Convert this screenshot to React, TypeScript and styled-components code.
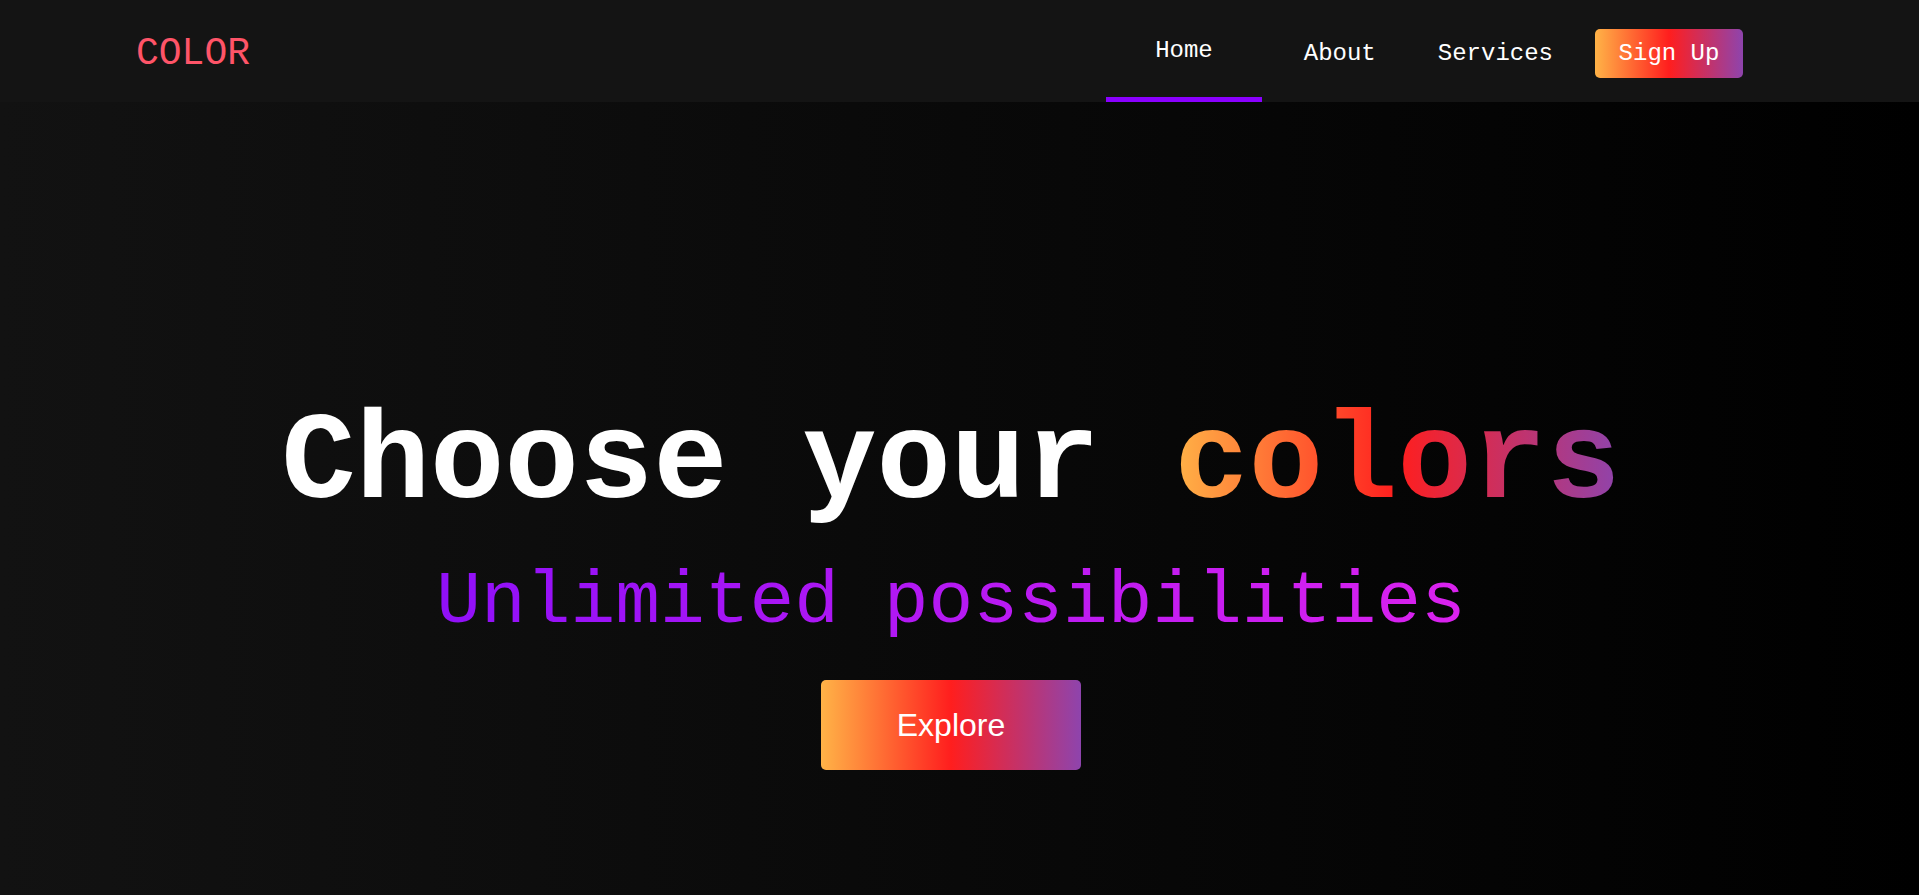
import React from "react";
import styled, { createGlobalStyle } from "styled-components";

const GlobalStyle = createGlobalStyle`
  html {
    overflow-y: scroll;
  }
  body {
    margin: 0;
    background: #000;
    font-family: "Liberation Mono", "Courier New", monospace;
  }
  * {
    box-sizing: border-box;
  }
`;

const brandGradient = "linear-gradient(to right, #ffb347, #ff1e1e 50%, #8e44ad)";

const Page = styled.div`
  min-height: 100vh;
  display: flex;
  flex-direction: column;
`;

const NavBar = styled.nav`
  height: 102px;
  padding: 4px 176px 0 136px;
  background: #141414;
  display: flex;
  align-items: center;
  justify-content: space-between;
`;

const Logo = styled.a`
  font-size: 38px;
  color: #ff5468;
  text-decoration: none;
`;

const NavLinks = styled.ul`
  list-style: none;
  margin: 0;
  padding: 0;
  height: 100%;
  display: flex;
  align-items: center;
  gap: 22px;
`;

const NavItem = styled.li`
  height: 100%;
  display: flex;
  align-items: center;
`;

const NavLink = styled.a<{ $active?: boolean }>`
  height: 100%;
  display: flex;
  align-items: center;
  padding: 0 ${({ $active }) => ($active ? "49px" : "20px")};
  border-bottom: ${({ $active }) => ($active ? "5px solid #8a00ff" : "none")};
  color: #fff;
  font-size: 24px;
  text-decoration: none;
  cursor: pointer;
`;

const SignUp = styled.button`
  font-family: "Liberation Mono", "Courier New", monospace;
  font-size: 24px;
  line-height: 27px;
  color: #fff;
  padding: 11px 23.6px;
  border: none;
  border-radius: 5px;
  background: ${brandGradient};
  cursor: pointer;
`;

const Hero = styled.main`
  flex: 1;
  padding: 287px 17px 0 0;
  background: linear-gradient(to right, #121212, #000);
  display: flex;
  flex-direction: column;
  align-items: center;
  text-align: center;
`;

const Title = styled.h1`
  margin: 0;
  font-size: 124px;
  line-height: 150px;
  font-weight: 700;
  color: #fff;
  white-space: pre;
`;

const Colors = styled.span`
  background: ${brandGradient};
  -webkit-background-clip: text;
  background-clip: text;
  color: transparent;
`;

const Subtitle = styled.p`
  margin: 18px 0 0;
  font-size: 74.6px;
  line-height: 90px;
  background: linear-gradient(to right, #9010f8, #da22ee);
  -webkit-background-clip: text;
  background-clip: text;
  color: transparent;
`;

const Explore = styled.button`
  margin-top: 33px;
  padding: 26px 76px;
  font-family: "Liberation Sans", Arial, sans-serif;
  font-size: 32px;
  line-height: 38px;
  color: #fff;
  border: none;
  border-radius: 5px;
  background: ${brandGradient};
  cursor: pointer;
`;

export default function App() {
  return (
    <>
      <GlobalStyle />
      <Page>
        <NavBar>
          <Logo href="#">COLOR</Logo>
          <NavLinks>
            <NavItem>
              <NavLink $active>Home</NavLink>
            </NavItem>
            <NavItem>
              <NavLink>About</NavLink>
            </NavItem>
            <NavItem>
              <NavLink>Services</NavLink>
            </NavItem>
            <NavItem>
              <SignUp>Sign Up</SignUp>
            </NavItem>
          </NavLinks>
        </NavBar>
        <Hero>
          <Title>
            Choose your <Colors>colors</Colors>
          </Title>
          <Subtitle>Unlimited possibilities</Subtitle>
          <Explore>Explore</Explore>
        </Hero>
      </Page>
    </>
  );
}
